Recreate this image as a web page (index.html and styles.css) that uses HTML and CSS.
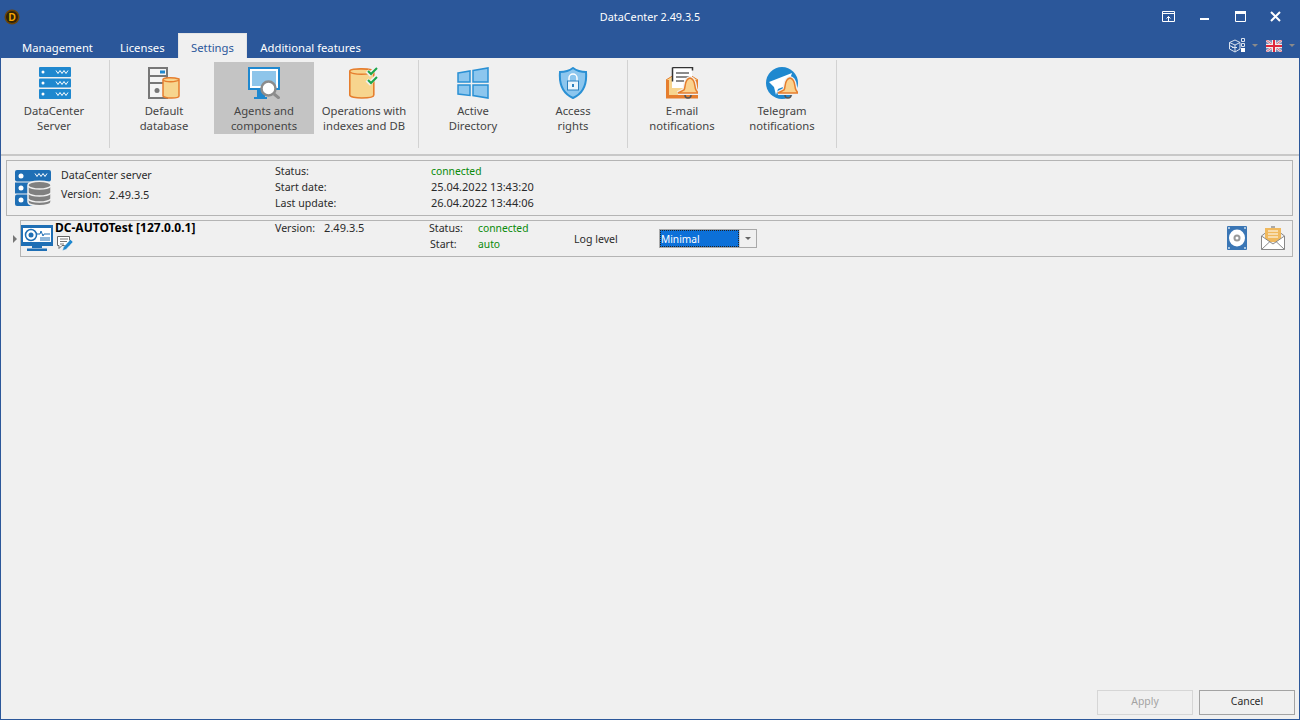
FILE: index.html
```html
<!DOCTYPE html>
<html>
    <head>
        <meta name="viewport" content="width=device-width, initial-scale=1.0">
        <title>DataCenter 2.49.3.5</title>
        <link rel="stylesheet" href="styles.css">
    </head>
    <body>
        <div class="window">
            <div class="titlebar">
                <div class="titleLeft">
                    <svg class="logo" width="16" height="16" viewBox="0 0 16 16"><circle cx="8" cy="8" r="7.500" fill="#6b4408"/><circle cx="8" cy="8" r="6" fill="#2f2208"/><text x="8" y="11.500" text-anchor="middle" class="logoText">D</text></svg>
                </div>
                <div class="titleText">DataCenter 2.49.3.5</div>
                <div class="winButtons">
                    <svg width="14" height="11" viewBox="0 0 14 11"><path d="M.5.5h12v10H.5zM.5 2.500h12" fill="none" stroke="#fff"/><path d="M6.500 10V5.500M4.500 7.500l2-2 2 2" fill="none" stroke="#fff"/></svg>
                    <svg class="winMin" width="9" height="11" viewBox="0 0 9 11"><path d="M0 7h9v2H0z" fill="#fff"/></svg>
                    <svg class="winMax" width="11" height="11" viewBox="0 0 11 11"><path d="M.5.5h10v10H.5z" fill="none" stroke="#fff"/><path d="M0 0h11v3H0z" fill="#fff"/></svg>
                    <svg class="winClose" width="11" height="11" viewBox="0 0 11 11"><path d="M1 1l9 9M10 1l-9 9" stroke="#fff" stroke-width="2"/></svg>
                </div>
            </div>
            <div class="tabBar">
                <div class="tabs">
                    <span class="tab">Management</span>
                    <span class="tab">Licenses</span>
                    <span class="tab active">Settings</span>
                    <span class="tab">Additional features</span>
                </div>
                <div class="tabTools">
                    <svg width="16" height="15" viewBox="0 0 16 15"><path d="M.5 4.500L6 2l5 2.500v6.500l-5 3-5.500-3zM.5 4.500L6 7l5-2.500M6 7v7M3 9.500h5M.5 7.500l5.500 2.500" fill="none" stroke="#dbe3ef"/><path d="M12.500.5h3v3h-3zM12.500 5.500h3v3h-3z" fill="none" stroke="#dbe3ef"/><path d="M12 10h4v4h-4z" fill="#fff"/></svg>
                    <span class="caret"></span>
                    <svg class="flag" width="16" height="12" viewBox="0 0 16 12"><path d="M0 0h16v12H0z" fill="#7d8db8"/><path d="M0 0l16 12M16 0L0 12" stroke="#e8dfe4" stroke-width="2.500"/><path d="M0 0l16 12M16 0L0 12" stroke="#d8485a" stroke-width=".8"/><path d="M8 0v12M0 6h16" stroke="#eee" stroke-width="4"/><path d="M8 0v12M0 6h16" stroke="#e0283c" stroke-width="2"/></svg>
                    <span class="caret"></span>
                </div>
            </div>

            <div class="ribbon">
                <div class="group first">
                    <div class="rbtn">
                        <svg width="32" height="32" viewBox="0 0 32 32">
                            <g fill="#1f88cf"><rect y="0" width="32" height="10" rx="1"/><rect y="11.500" width="32" height="9" rx="1"/><rect y="22" width="32" height="10" rx="1"/></g>
                            <g fill="#fff"><circle cx="4" cy="5" r="1.500"/><circle cx="4" cy="16" r="1.500"/><circle cx="4" cy="27" r="1.500"/></g>
                            <path d="M17 3.500l2 3 2-3 2 3 2-3 2 3 2-3M17 14.500l2 3 2-3 2 3 2-3 2 3 2-3M17 25.500l2 3 2-3 2 3 2-3 2 3 2-3" fill="none" stroke="#fff"/>
                        </svg>
                        <span>DataCenter<br>Server</span>
                    </div>
                </div>
                <div class="group">
                    <div class="rbtn">
                        <svg width="32" height="32" viewBox="0 0 32 32">
                            <path d="M1 1h18v30H1z" fill="#f4f4f4" stroke="#777" stroke-width="2"/><path d="M1 9h18M1 16h18" stroke="#777" stroke-width="2"/>
                            <rect x="12" y="3.500" width="5" height="3" fill="#1f88cf"/><circle cx="9" cy="23.500" r="2.500" fill="#777"/>
                            <path d="M15 12.500c0-2 10-2.500 16-.5v17c0 2.500-14 3-16 0z" fill="#f7d58e" stroke="#e67e2e" stroke-width="1.500"/><path d="M15 13c3 2.500 13 2 16 0" fill="none" stroke="#e67e2e" stroke-width="1.500"/>
                        </svg>
                        <span>Default<br>database</span>
                    </div>
                    <div class="rbtn selected">
                        <svg width="32" height="32" viewBox="0 0 32 32">
                            <path d="M0 0h32v23H0z" fill="#1f88cf"/><path d="M2 2h28v19H2z" fill="#fff"/><path d="M4 4h24v15H4z" fill="#8ec5ea"/><path d="M9 23h8v7H9zM6 30h13v2H6z" fill="#1f88cf"/>
                            <circle cx="20.500" cy="21.500" r="7" fill="#fff" stroke="#8c8c8c" stroke-width="2.500"/><path d="M26 27l5.500 4.500" stroke="#8c8c8c" stroke-width="3"/>
                        </svg>
                        <span>Agents and<br>components</span>
                    </div>
                    <div class="rbtn">
                        <svg width="30" height="32" viewBox="0 0 30 32">
                            <path d="M.8 4c0-3 24-3 24 1v23c0 4-24 4-24 0z" fill="#f7d58e" stroke="#e67e2e" stroke-width="1.600"/><path d="M1 5c3 3 20 3 23 0" fill="none" stroke="#e67e2e" stroke-width="1.600"/>
                            <path d="M18 4l3 3 6-6M18 13l3 3 6-6" fill="none" stroke="#f0f0f0" stroke-width="4"/><path d="M19 4l3 3 6-6M19 13l3 3 6-6" fill="none" stroke="#1aa64a" stroke-width="2"/>
                        </svg>
                        <span>Operations with<br>indexes and DB</span>
                    </div>
                </div>
                <div class="group">
                    <div class="rbtn">
                        <svg width="32" height="32" viewBox="0 0 32 32" fill="#8cc6ee" stroke="#2a90d4" stroke-width="1.500"><path d="M1 6l12-2v11H1zM16 3.500L31 1v14H16zM1 18h12v10.500L1 27zM16 18h15v13l-15-2.500z"/></svg>
                        <span>Active<br>Directory</span>
                    </div>
                    <div class="rbtn">
                        <svg width="30" height="32" viewBox="0 0 30 32">
                            <path d="M15 1c4 3 8 4 13 4 1 12-2 21-13 26C4 26 1 17 2 5c5 0 9-1 13-4z" fill="#8cc6ee" stroke="#2a90d4" stroke-width="2"/>
                            <path d="M11 14v-3a4 4 0 018 0v3" fill="none" stroke="#fff" stroke-width="1.500"/><rect x="9.500" y="14" width="11" height="9" fill="#eaf5fc" stroke="#2a80bf"/><rect x="14" y="17" width="2" height="3" fill="#2a80bf"/>
                        </svg>
                        <span>Access<br>rights</span>
                    </div>
                </div>
                <div class="group">
                    <div class="rbtn">
                        <svg width="32" height="32" viewBox="0 0 32 32">
                            <path d="M0 13L16 3l16 10v18H0z" fill="#f7d58e" stroke="#e67e2e" stroke-width="1"/><path d="M0 13h3v15h26V13h3v18H0z" fill="#e67e2e"/>
                            <path d="M6 1h20v20H6z" fill="#fff"/><path d="M6.500.5h20v3M6.500.5v14" fill="none" stroke="#333" stroke-width="1.500"/><path d="M10 6h13M10 10h13M10 14h8" stroke="#666" stroke-width="1.500"/>
                            <path d="M12 26h20l-2-3c-2-3 0-11-6-12-6 1-4 9-6 12z" fill="#f0f0f0" stroke="#f0f0f0" stroke-width="4"/><path d="M12 26h20l-2-3c-2-3 0-11-6-12-6 1-4 9-6 12z" fill="#fbd28e" stroke="#e67e2e" stroke-width="1.500"/><path d="M19 28a3 3 0 006 0" fill="none" stroke="#555" stroke-width="1.500"/>
                        </svg>
                        <span>E-mail<br>notifications</span>
                    </div>
                    <div class="rbtn">
                        <svg width="32" height="32" viewBox="0 0 32 32">
                            <circle cx="16" cy="16" r="16" fill="#1f88cf"/><path d="M3 15L26 6l-4 12-10 4-2 6-2-8z" fill="#fff"/>
                            <path d="M12 26h20l-2-3c-2-3 0-11-6-12-6 1-4 9-6 12z" fill="#f0f0f0" stroke="#f0f0f0" stroke-width="4"/><path d="M12 26h20l-2-3c-2-3 0-11-6-12-6 1-4 9-6 12z" fill="#fbd28e" stroke="#e67e2e" stroke-width="1.500"/><path d="M19 28a3 3 0 006 0" fill="none" stroke="#555" stroke-width="1.500"/>
                        </svg>
                        <span>Telegram<br>notifications</span>
                    </div>
                </div>
            </div>

            <div class="content">
                <div class="panel serverPanel">
                    <svg class="serverIcon" width="37" height="37" viewBox="0 0 37 37">
                        <g fill="#1f6fb5"><rect width="36" height="11.500" rx="2"/><rect y="12.500" width="27" height="11"/><rect y="24.500" width="27" height="11.500" rx="2"/></g>
                        <g fill="#fff"><circle cx="6" cy="6" r="2.500"/><circle cx="6" cy="18" r="2.500"/><circle cx="6" cy="30" r="2.500"/></g>
                        <path d="M20 3.500l2 3 2-3 2 3 2-3 2 3 2-3" fill="none" stroke="#fff"/>
                        <path d="M13 15c0-5 23-5 23 0v17c0 5-23 5-23 0z" fill="#808080" stroke="#f0f0f0" stroke-width="1.500"/><path d="M13 16c4 4 19 4 23 0M13 23c4 4 19 4 23 0M13 29c4 4 19 4 23 0" fill="none" stroke="#f0f0f0" stroke-width="1.300"/>
                    </svg>
                    <div class="serverName">
                        <div>DataCenter server</div>
                        <div class="verRow"><span>Version:</span><span class="num">2.49.3.5</span></div>
                    </div>
                    <div class="serverInfo">
                        <span>Status:</span><span class="ok">connected</span>
                        <span>Start date:</span><span class="num">25.04.2022 13:43:20</span>
                        <span>Last update:</span><span class="num">26.04.2022 13:44:06</span>
                    </div>
                </div>

                <div class="agentRow">
                    <span class="expander"></span>
                    <div class="panel agentPanel">
                        <svg class="agentIcon" width="32" height="26" viewBox="0 0 32 26">
                            <path d="M1 1h30v19H1z" fill="#fff" stroke="#1f6fb5" stroke-width="2"/><path d="M0 0h32v3H0zM0 17h32v3H0zM11 20h10v3H11zM6 23.500h20V26H6z" fill="#1f6fb5"/>
                            <circle cx="10" cy="10" r="5.500" fill="none" stroke="#1f6fb5" stroke-width="1.500"/><circle cx="10" cy="10" r="2.500" fill="#1f6fb5"/><path d="M16 9h3l1-3 2 5 1-2h6M19 13h10M19 15h10" fill="none" stroke="#1f6fb5"/>
                        </svg>
                        <div class="agentName">
                            <strong>DC-AUTOTest [127.0.0.1]</strong>
                            <svg width="16" height="15" viewBox="0 0 16 15"><path d="M.5.5h12v9H5l-3 3v-3H.5z" fill="#fff" stroke="#666"/><path d="M3 3h8M3 5.500h7M3 8h4" stroke="#777"/><path d="M5.500 14.500l1-3.500 7-7.500 2.500 2.500-7 7.500z" fill="#1f88cf" stroke="#f0f0f0" stroke-width=".5"/></svg>
                        </div>
                        <div class="agentVer"><span>Version:</span><span class="num">2.49.3.5</span></div>
                        <div class="agentState">
                            <span>Status:</span><span class="ok">connected</span>
                            <span class="startLabel">Start:</span><span class="ok">auto</span>
                        </div>
                        <div class="logLabel">Log level</div>
                        <div class="combo">
                            <div class="comboValue">Minimal</div>
                            <div class="comboArrow"><span class="caret"></span></div>
                        </div>
                        <div class="agentTools">
                            <svg width="20" height="24" viewBox="0 0 20 24"><rect width="20" height="24" rx="1" fill="#3a76b5"/><ellipse cx="10" cy="12" rx="8" ry="8.500" fill="#fff"/><circle cx="10" cy="12" r="3.500" fill="#9a9a9a"/><circle cx="10" cy="12" r="1.500" fill="#fff"/><g fill="#cfe0f0"><circle cx="2" cy="2" r="1"/><circle cx="18" cy="2" r="1"/><circle cx="2" cy="22" r="1"/><circle cx="18" cy="22" r="1"/></g></svg>
                            <svg width="24" height="24" viewBox="0 0 24 24"><path d="M.5 10L5 6.500M23.500 10L19 6.500" fill="none" stroke="#888"/><path d="M10 0h4v2h-4z" fill="#aaa"/><path d="M4 2h16v14H4z" fill="#f0b95e"/><path d="M7 5h10M7 8h10M7 11h10" stroke="#fff"/><path d="M.5 10L12 18l11.500-8v13.500H.5z" fill="#fff" stroke="#888"/><path d="M.5 23.500L9 15.500M23.500 23.500L15 15.500" fill="none" stroke="#888"/></svg>
                        </div>
                    </div>
                </div>
            </div>

            <div class="footer">
                <div class="btn disabled">Apply</div>
                <div class="btn">Cancel</div>
            </div>
        </div>
    </body>
</html>
```

FILE: styles.css
```css
*{
    box-sizing: border-box;
}
body{
    margin: 0px;
    background-color: #f0f0f0;
    color: #2a2a2a;
    font-family: "Noto Sans", "Liberation Sans", sans-serif;
    font-size: 10.6px;
}
svg{
    display: block;
    flex: none;
}
.window{
    width: 1300px;
    height: 720px;
    display: flex;
    flex-direction: column;
    border-left: 1px solid #2b579a;
    border-right: 1px solid #2b579a;
    border-bottom: 1px solid #2b579a;
    overflow: hidden;
}
.titlebar{
    height: 33px;
    background-color: #2b579a;
    color: #fff;
    display: grid;
    grid-template-columns: 1fr auto 1fr;
    align-items: center;
    font-size: 10.8px;
}
.titleLeft{
    padding-left: 3px;
}
.logoText{
    fill: #f5a800;
    font-family: "Liberation Sans", sans-serif;
    font-size: 10px;
    font-weight: bold;
}
.winButtons{
    display: flex;
    justify-content: flex-end;
    align-items: center;
    padding-right: 18px;
}
.winMin{
    margin-left: 24px;
}
.winMax{
    margin-left: 26px;
}
.winClose{
    margin-left: 24px;
}
.tabBar{
    height: 25px;
    background-color: #2b579a;
    display: flex;
    justify-content: space-between;
}
.tabs{
    display: flex;
    padding-left: 7.5px;
}
.tab{
    color: #fff;
    font-size: 11.25px;
    line-height: 29px;
    padding: 0px 13.5px;
}
.tab.active{
    background-color: #f0f0f0;
    color: #2b579a;
    border: 1px solid #e4e4e4;
    border-bottom: none;
    padding: 0px 12px;
    line-height: 27px;
}
.tabTools{
    display: flex;
    align-items: center;
    padding: 0px 4px 0px 0px;
}
.caret{
    display: block;
    border-top: 3px solid #8a8a8a;
    border-left: 3px solid transparent;
    border-right: 3px solid transparent;
}
.tabTools .caret{
    margin-left: 7px;
}
.flag{
    margin-left: 8px;
}
.ribbon{
    height: 98px;
    display: flex;
    align-items: flex-start;
    padding-top: 2px;
    border-bottom: 2px solid #c8c8c8;
}
.group{
    height: 88px;
    display: flex;
    padding: 2px 4px 0px;
    border-right: 1px solid #d2d2d2;
}
.group.first{
    padding: 2px 5px 0px 3px;
}
.group.first svg{
    margin-left: 1px;
}
.rbtn{
    width: 100px;
    height: 72px;
    padding-top: 5px;
    display: flex;
    flex-direction: column;
    align-items: center;
    text-align: center;
    font-size: 11.25px;
    line-height: 15px;
    color: #444;
}
.rbtn span{
    margin-top: 4px;
}
.rbtn.selected{
    background-color: #c4c4c4;
}
.content{
    flex: 1;
    padding: 4px 6px 0px 5px;
}
.panel{
    border: 1px solid #b4b4b4;
    display: flex;
}
.serverPanel{
    height: 56px;
}
.serverIcon{
    margin: 9px 0px 0px 8px;
}
.serverName{
    width: 223px;
    padding: 5px 0px 0px 9px;
    line-height: 19px;
}
.verRow{
    display: flex;
    gap: 8px;
}
.num{
    font-size: 11px;
}
.serverInfo{
    display: grid;
    grid-template-columns: 156px auto;
    grid-auto-rows: 16px;
    line-height: 16px;
    padding-top: 2px;
}
.ok{
    color: #0a8a0a;
    font-size: 10.3px;
}
.agentRow{
    display: flex;
    align-items: center;
    margin-top: 4px;
}
.expander{
    width: 14px;
    padding-left: 7px;
}
.expander::before{
    content: "";
    display: block;
    width: 0px;
    border-left: 4px solid #777;
    border-top: 4px solid transparent;
    border-bottom: 4px solid transparent;
}
.agentPanel{
    flex: 1;
    height: 37px;
}
.agentIcon{
    margin-top: 4px;
}
.agentName{
    width: 222px;
    padding-left: 2px;
    line-height: 14px;
}
.agentName strong{
    font-size: 12px;
    color: #000;
}
.agentName svg{
    margin: 1px 0px 0px 2px;
}
.agentVer{
    width: 154px;
    display: flex;
    gap: 9px;
    line-height: 14px;
}
.agentState{
    width: 145px;
    display: grid;
    grid-template-columns: 49px auto;
    grid-auto-rows: 16px;
    line-height: 14px;
}
.startLabel{
    padding-left: 1px;
}
.logLabel{
    width: 85px;
    line-height: 36px;
}
.combo{
    width: 98px;
    height: 19px;
    margin-top: 8px;
    border: 1px solid #a9a9a9;
    display: flex;
    background-color: #fff;
}
.comboValue{
    width: 79px;
    background-color: #0c70d8;
    color: #fff;
    border: 1px dotted #222;
    line-height: 16px;
    font-size: 10.2px;
}
.comboArrow{
    flex: 1;
    background-color: #f0f0f0;
    border-left: 1px solid #ccc;
    display: flex;
    align-items: center;
    justify-content: center;
}
.comboArrow .caret{
    border-top-color: #666;
}
.agentTools{
    flex: 1;
    display: flex;
    justify-content: flex-end;
    gap: 14px;
    padding: 5px 7px 0px 0px;
}
.footer{
    display: flex;
    justify-content: flex-end;
    gap: 6px;
    padding: 0px 4px 4px 0px;
}
.btn{
    width: 96px;
    height: 25px;
    border: 1px solid #a3a3a3;
    text-align: center;
    line-height: 21px;
    font-size: 10.4px;
}
.btn.disabled{
    border-color: #d6d6d6;
    color: #a3a3a3;
}
```
